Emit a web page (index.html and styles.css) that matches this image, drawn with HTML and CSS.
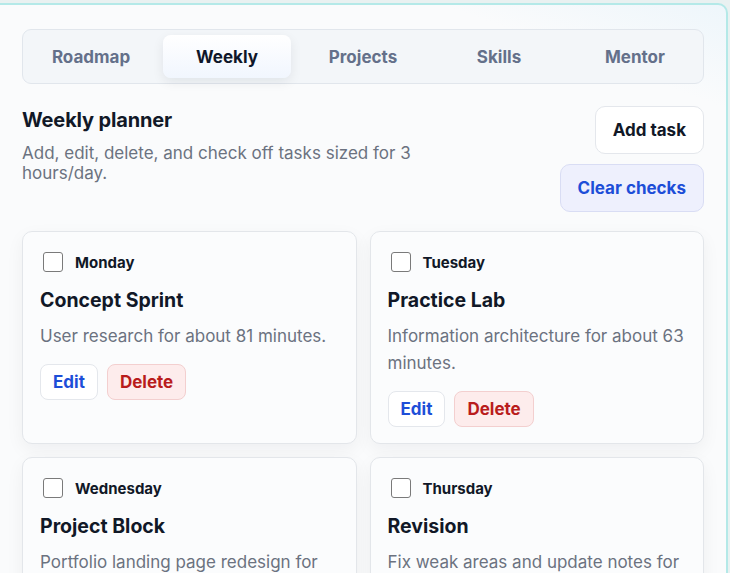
FILE: index.html
```html
<!DOCTYPE html>
<html lang="en">
<head>
<meta charset="utf-8">
<title>Weekly planner</title>
<link rel="stylesheet" href="styles.css">
</head>
<body>
<main class="panel">
  <nav class="tabs">
    <button class="tab">Roadmap</button>
    <button class="tab active">Weekly</button>
    <button class="tab">Projects</button>
    <button class="tab">Skills</button>
    <button class="tab">Mentor</button>
  </nav>

  <header class="planner-head">
    <div class="intro">
      <h1>Weekly planner</h1>
      <p>Add, edit, delete, and check off tasks sized for 3 hours/day.</p>
    </div>
    <div class="head-actions">
      <button class="btn btn-add">Add task</button>
      <button class="btn btn-clear">Clear checks</button>
    </div>
  </header>

  <section class="cards">
    <article class="card">
      <label class="day"><span class="check"></span>Monday</label>
      <h2>Concept Sprint</h2>
      <p>User research for about 81 minutes.</p>
      <div class="actions"><button class="btn-sm edit">Edit</button><button class="btn-sm del">Delete</button></div>
    </article>
    <article class="card">
      <label class="day"><span class="check"></span>Tuesday</label>
      <h2>Practice Lab</h2>
      <p>Information architecture for about 63 minutes.</p>
      <div class="actions"><button class="btn-sm edit">Edit</button><button class="btn-sm del">Delete</button></div>
    </article>
    <article class="card">
      <label class="day"><span class="check"></span>Wednesday</label>
      <h2>Project Block</h2>
      <p>Portfolio landing page redesign for about 90 minutes.</p>
      <div class="actions"><button class="btn-sm edit">Edit</button><button class="btn-sm del">Delete</button></div>
    </article>
    <article class="card">
      <label class="day"><span class="check"></span>Thursday</label>
      <h2>Revision</h2>
      <p>Fix weak areas and update notes for about 60 minutes.</p>
      <div class="actions"><button class="btn-sm edit">Edit</button><button class="btn-sm del">Delete</button></div>
    </article>
  </section>
</main>
</body>
</html>
```

FILE: styles.css
```css
* { box-sizing: border-box; }
html, body { margin: 0; padding: 0; }
body {
  background: #e9f1f1;
  font-family: Inter, "Noto Sans", sans-serif;
  color: #111827;
  overflow: hidden;
  height: 573px;
}
.panel {
  margin: 3px 2px 0 -12px;
  border: 2px solid #b4e9e8;
  border-radius: 10px;
  background: linear-gradient(200deg, #eef6fb 0%, #fafbfc 12%, #fafbfc 100%);
  padding: 24px 22px 40px 32px;
  height: 600px;
  overflow: hidden;
}
.tabs {
  display: grid;
  grid-template-columns: repeat(5, 128px);
  gap: 8px;
  justify-content: center;
  padding: 5px 4px;
  border: 1px solid #e1e6ec;
  border-radius: 9px;
  background: #f3f6f9;
}
.tab {
  height: 43px;
  border: 0;
  background: transparent;
  font: 700 17px Inter, sans-serif;
  color: #64708a;
  border-radius: 8px;
}
.tab.active {
  color: #0f172a;
  background: linear-gradient(180deg, #ffffff 0%, #f1f6fe 100%);
  box-shadow: 0 4px 12px rgba(15, 23, 42, 0.08);
}
.planner-head {
  display: flex;
  justify-content: space-between;
  align-items: flex-start;
  margin-top: 22px;
}
.intro { width: 400px; }
.intro h1 {
  margin: 1px 0 0;
  font-size: 20px;
  font-weight: 700;
  line-height: 26px;
  letter-spacing: -0.15px;
  color: #111827;
}
.intro p {
  margin: 10px 0 0;
  font-size: 17px;
  line-height: 20px;
  color: #6b7280;
}
.head-actions {
  display: flex;
  flex-direction: column;
  align-items: flex-end;
  gap: 10px;
}
.btn {
  height: 48px;
  padding: 0 17px;
  border-radius: 10px;
  font: 700 17px Inter, sans-serif;
}
.btn-add {
  background: #ffffff;
  border: 1px solid #e4e7ec;
  color: #111827;
}
.btn-clear {
  background: #eef0fd;
  border: 1px solid #d9ddf4;
  color: #1d4ed8;
}
.cards {
  display: grid;
  grid-template-columns: 1fr 1fr;
  gap: 13px 13px;
  margin-top: 19px;
}
.card {
  background: #fbfcfd;
  border: 1px solid #e3e6ea;
  border-radius: 10px;
  padding: 17px 17px 16px;
  box-shadow: 0 6px 18px rgba(15, 23, 42, 0.05);
}
.day {
  display: flex;
  align-items: center;
  gap: 12px;
  height: 26px;
  padding-left: 3px;
  font-size: 15px;
  font-weight: 700;
  color: #111827;
}
.check {
  width: 20px;
  height: 20px;
  border: 1.5px solid #7a7a7a;
  border-radius: 3px;
  background: #fff;
}
.card h2 {
  margin: 13px 0 0;
  font-size: 19.5px;
  line-height: 24px;
  font-weight: 700;
  color: #111827;
}
.card p {
  margin: 11px 0 0;
  font-size: 17px;
  line-height: 27px;
  color: #6b7280;
}
.actions {
  display: flex;
  gap: 9px;
  margin-top: 14px;
}
.btn-sm {
  height: 36px;
  padding: 0 12px;
  border-radius: 8px;
  font: 700 17px Inter, sans-serif;
}
.edit { background: #fff; border: 1px solid #e4e7ec; color: #1d4ed8; }
.del { background: #fdecec; border: 1px solid #f3cfcf; color: #b91c1c; padding: 0 12px; }
```
